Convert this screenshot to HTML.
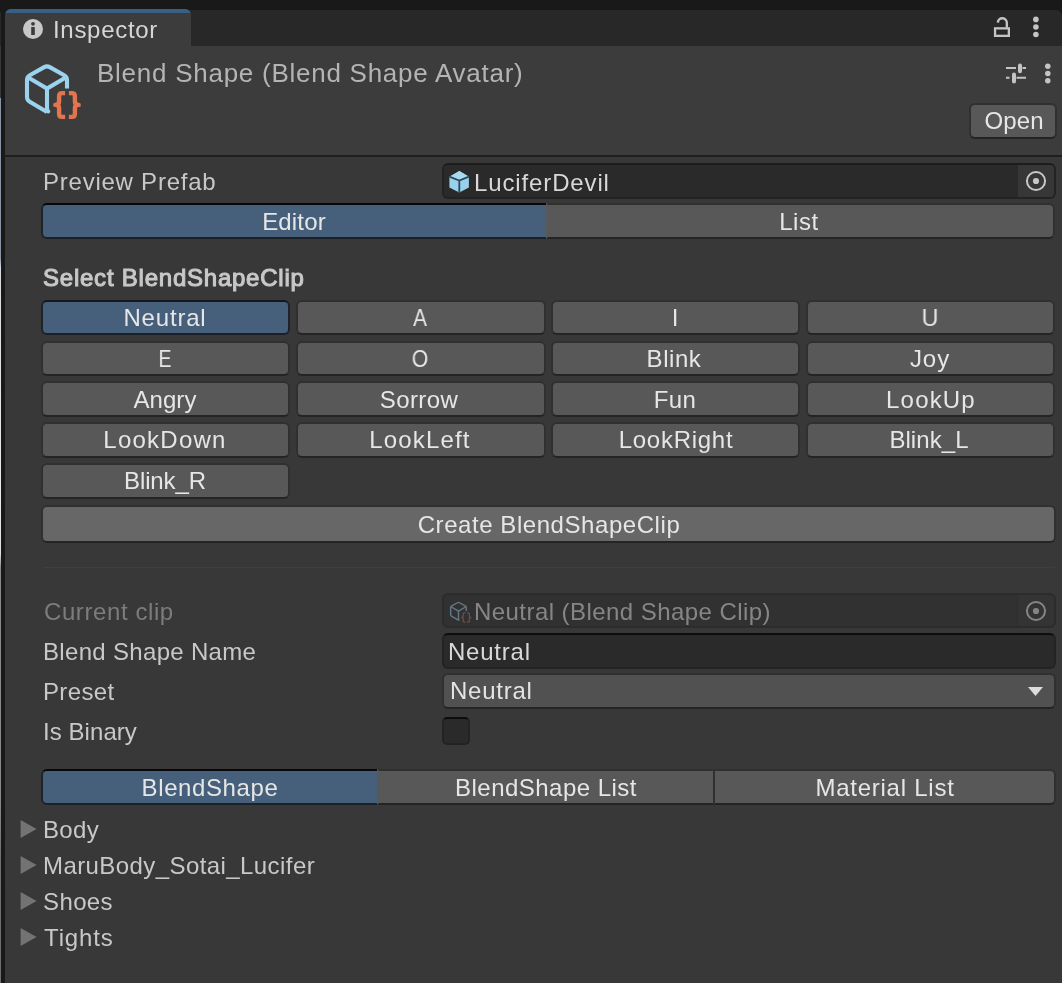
<!DOCTYPE html>
<html><head><meta charset="utf-8"><title>Inspector</title>
<style>
*{box-sizing:border-box;margin:0;padding:0}
html,body{width:1062px;height:983px;overflow:hidden;background:#191919}
body{position:relative;font-family:"Liberation Sans",sans-serif;font-size:24px;color:#c8c8c8}
.a{position:absolute}
.t{position:absolute;white-space:nowrap;line-height:1;will-change:transform}
.btn{position:absolute;background:#585858;border:2px solid #303030;border-bottom-color:#242424;border-radius:6px;color:#e6e6e6;white-space:nowrap;line-height:1}
.btn.on{background:#46607c;border-color:#14171c #1e232b #1c2027 #1e232b}
.btn span{display:block;white-space:nowrap;will-change:transform}
.fld{position:absolute;background:#2a2a2a;border:2px solid #232323;border-top-color:#1c1c1c;border-radius:6px}
</style></head><body>
<div class="a" style="left:0;top:12px;width:1.2px;height:34px;background:#282828"></div><div class="a" style="left:0;top:46px;width:1.2px;height:52px;background:#383838"></div><div class="a" style="left:0;top:98px;width:1.2px;height:885px;background:linear-gradient(#8a95a3 0,#8a95a3 160px,#d8dadc 170px,#e8e8e8 400px,#e0e0e0 455px,#8a8a8a 470px,#8a8a8a 700px,#707070 760px,#6e6e6e 100%)"></div>
<div class="a" id="tabbar" style="left:5px;top:9.5px;width:1057px;height:37px;background:#282828;border-radius:6px 6px 0 0"></div>
<div class="a" id="hdr" style="left:5px;top:46px;width:1057px;height:110px;background:#3c3c3c"></div>
<div class="a" id="bodybg" style="left:5px;top:157px;width:1057px;height:826px;background:#383838"></div>
<div class="a" id="sep" style="left:5px;top:155px;width:1057px;height:2px;background:#1f1f1f"></div>
<div class="a" id="tab" style="left:5px;top:8.7px;width:186px;height:38px;background:#3c3c3c;border-radius:6px 6px 0 0;overflow:hidden"><div class="a" style="left:0;top:0;width:100%;height:4px;background:#3a5f84"></div></div>
<svg class="a" style="left:22.3px;top:18px" width="22" height="22" viewBox="0 0 22 22"><circle cx="11" cy="11" r="10" fill="#c8c8c8"/><circle cx="11" cy="5.8" r="1.9" fill="#3c3c3c"/><rect x="9.2" y="9" width="3.6" height="8" fill="#3c3c3c"/></svg>
<div class="t" id="t_insp" style="left:52.72px;top:18.38px;color:#d6d6d6;letter-spacing:0.70px;margin-right:-0.70px;">Inspector</div>
<svg class="a" style="left:990px;top:14px" width="26" height="26" viewBox="0 0 26 26" fill="none" stroke="#c4c4c4" stroke-width="2.3"><rect x="5.05" y="14.35" width="13.8" height="7.5"/><path d="M7.85 8.6 A4.5 4.5 0 0 1 16.85 9 V13.4" stroke-width="2.4"/></svg>
<svg class="a" style="left:1030px;top:14px" width="12" height="26" viewBox="0 0 12 26" fill="#c4c4c4"><circle cx="5.9" cy="5.4" r="2.8"/><circle cx="5.9" cy="13" r="2.8"/><circle cx="5.9" cy="20.5" r="2.8"/></svg>
<svg class="a" id="bigicon" style="left:15px;top:55px" width="80" height="74" viewBox="0 0 80 74" fill="none"><g stroke="#9bd2ee" stroke-width="4.1" stroke-linejoin="round" stroke-linecap="butt"><path d="M52.00 33.60 L52.00 25.00 Q52.00 21.80 49.21 20.24 L34.79 12.16 Q32.00 10.60 29.21 12.16 L14.79 20.24 Q12.00 21.80 12.00 25.00 L12.00 42.00 Q12.00 45.20 14.76 46.82 L32.00 56.90"/><path d="M12 21.8 L32 33.6 L52 21.8" stroke-linejoin="miter"/><path d="M32 33.6 V56.9"/><circle cx="33.2" cy="56.4" r="2.05" fill="#9bd2ee" stroke="none"/></g><g stroke="#e2754f" stroke-width="4.4" stroke-linecap="butt" stroke-linejoin="round"><path d="M50.10 38.1 H47.10 Q44.10 38.1 44.10 41.1 V46.6 Q44.10 49.9 40.30 49.9 Q44.10 49.9 44.10 53.2 V58.9 Q44.10 61.9 47.10 61.9 H50.10"/><path d="M53.90 38.1 H56.90 Q59.90 38.1 59.90 41.1 V46.6 Q59.90 49.9 63.70 49.9 Q59.90 49.9 59.90 53.2 V58.9 Q59.90 61.9 56.90 61.9 H53.90"/></g></svg>
<div class="t" id="t_title" style="left:97.48px;top:59.99px;font-size:26px;color:#b4b4b4;letter-spacing:0.74px;margin-right:-0.74px;">Blend Shape (Blend Shape Avatar)</div>
<svg class="a" style="left:1004px;top:61px" width="24" height="24" viewBox="0 0 24 24" fill="none" stroke="#c4c4c4" stroke-width="2"><path d="M2 7 H12 M18.5 7 H22 M2 16.7 H5.5 M12.5 16.7 H22"/><path d="M16 4.4 V10.2 M10 13.6 V20.4" stroke-width="4" stroke-linecap="round"/></svg>
<svg class="a" style="left:1042px;top:59.5px" width="12" height="26" viewBox="0 0 12 26" fill="#c4c4c4"><circle cx="5.8" cy="6.3" r="2.75"/><circle cx="5.8" cy="13.5" r="2.75"/><circle cx="5.8" cy="20.7" r="2.75"/></svg>
<div class="btn" id="b_open" style="left:969px;top:103px;width:88.20px;height:35.80px;"><span style="position:absolute;left:42.60px;top:3.68px;transform:translateX(-50%);letter-spacing:0.13px;margin-right:-0.13px;">Open</span></div>
<div class="t" id="t_pp" style="left:42.50px;top:169.88px;letter-spacing:0.76px;margin-right:-0.76px;">Preview Prefab</div>
<div class="fld" id="f_pp" style="left:442px;top:162.8px;width:614px;height:36px;overflow:hidden"><div class="a" style="right:0;top:0;width:36.4px;height:100%;background:#373737"></div></div>
<svg class="a" id="cube1" style="left:447px;top:169px" width="24" height="25" viewBox="0 0 24 25"><path d="M12.4 1.9 L21.9 7.7 V18.6 L12.3 23.5 L2.4 18.6 V7.7 Z" fill="#99d0ec"/><path d="M12.4 1.9 L21.9 7.7 L12.3 11.4 L2.4 7.7 Z" fill="#a7daf1"/><path d="M2.4 7.7 L12.3 11.6 L21.9 7.7 M12.3 11.6 V23.5" stroke="#2d485b" stroke-width="1.8" fill="none"/></svg>
<div class="t" id="t_ld" style="left:473.96px;top:171.08px;color:#d8d8d8;letter-spacing:0.87px;margin-right:-0.87px;">LuciferDevil</div>
<svg class="a" style="left:1024.9px;top:170px;overflow:visible" width="22" height="22" viewBox="0 0 22 22"><circle cx="11" cy="11" r="9.05" fill="none" stroke="#c8c8c8" stroke-width="2"/><circle cx="11" cy="11" r="3.1" fill="#c8c8c8"/></svg>
<div class="btn on" id="tb_ed" style="left:41px;top:203px;width:507.00px;height:36.00px;border-radius:6px 0 0 6px;border-top-color:#06080c;"><span style="position:absolute;left:250.72px;top:4.88px;transform:translateX(-50%);letter-spacing:0.14px;margin-right:-0.14px;">Editor</span></div>
<div class="btn" id="tb_li" style="left:546px;top:203px;width:509.40px;height:36.00px;border-radius:0 6px 6px 0;border-left-color:transparent;"><span style="position:absolute;left:251.22px;top:4.88px;transform:translateX(-50%);letter-spacing:0.60px;margin-right:-0.60px;">List</span></div>
<div class="t" id="t_sel" style="left:43.48px;top:265.98px;color:#c8c8c8;letter-spacing:0.77px;margin-right:-0.77px;-webkit-text-stroke:1.05px #c8c8c8;">Select BlendShapeClip</div>
<div class="btn on" id="g0" style="left:41px;top:299.7px;width:248.80px;height:35.80px;"><span style="position:absolute;left:122.40px;top:4.28px;transform:translateX(-50%);letter-spacing:0.81px;margin-right:-0.81px;">Neutral</span></div>
<div class="btn" id="g1" style="left:296px;top:299.7px;width:249.60px;height:35.80px;"><span style="position:absolute;left:122.48px;top:4.28px;transform:translateX(-50%) scaleX(0.87);">A</span></div>
<div class="btn" id="g2" style="left:551px;top:299.7px;width:248.80px;height:35.80px;"><span style="position:absolute;left:121.96px;top:4.28px;transform:translateX(-50%);">I</span></div>
<div class="btn" id="g3" style="left:805.6px;top:299.7px;width:249.50px;height:35.80px;"><span style="position:absolute;left:122.30px;top:4.28px;transform:translateX(-50%) scaleX(0.97);">U</span></div>
<div class="btn" id="g4" style="left:41px;top:340.5px;width:248.80px;height:35.80px;"><span style="position:absolute;left:122.20px;top:4.38px;transform:translateX(-50%) scaleX(0.8);">E</span></div>
<div class="btn" id="g5" style="left:296px;top:340.5px;width:249.60px;height:35.80px;"><span style="position:absolute;left:121.90px;top:4.38px;transform:translateX(-50%) scaleX(0.88);">O</span></div>
<div class="btn" id="g6" style="left:551px;top:340.5px;width:248.80px;height:35.80px;"><span style="position:absolute;left:120.93px;top:4.38px;transform:translateX(-50%);letter-spacing:0.56px;margin-right:-0.56px;">Blink</span></div>
<div class="btn" id="g7" style="left:805.6px;top:340.5px;width:249.50px;height:35.80px;"><span style="position:absolute;left:122.16px;top:4.38px;transform:translateX(-50%);letter-spacing:0.94px;margin-right:-0.94px;">Joy</span></div>
<div class="btn" id="g8" style="left:41px;top:381.3px;width:248.80px;height:35.80px;"><span style="position:absolute;left:121.98px;top:4.68px;transform:translateX(-50%);letter-spacing:0.03px;margin-right:-0.03px;">Angry</span></div>
<div class="btn" id="g9" style="left:296px;top:381.3px;width:249.60px;height:35.80px;"><span style="position:absolute;left:121.22px;top:4.68px;transform:translateX(-50%);letter-spacing:0.38px;margin-right:-0.38px;">Sorrow</span></div>
<div class="btn" id="g10" style="left:551px;top:381.3px;width:248.80px;height:35.80px;"><span style="position:absolute;left:122.44px;top:4.68px;transform:translateX(-50%);letter-spacing:0.38px;margin-right:-0.38px;">Fun</span></div>
<div class="btn" id="g11" style="left:805.6px;top:381.3px;width:249.50px;height:35.80px;"><span style="position:absolute;left:123.22px;top:4.68px;transform:translateX(-50%);letter-spacing:1.18px;margin-right:-1.18px;">LookUp</span></div>
<div class="btn" id="g12" style="left:41px;top:422.1px;width:248.80px;height:35.80px;"><span style="position:absolute;left:122.32px;top:4.18px;transform:translateX(-50%);letter-spacing:1.25px;margin-right:-1.25px;">LookDown</span></div>
<div class="btn" id="g13" style="left:296px;top:422.1px;width:249.60px;height:35.80px;"><span style="position:absolute;left:122.35px;top:4.18px;transform:translateX(-50%);letter-spacing:1.15px;margin-right:-1.15px;">LookLeft</span></div>
<div class="btn" id="g14" style="left:551px;top:422.1px;width:248.80px;height:35.80px;"><span style="position:absolute;left:122.51px;top:4.18px;transform:translateX(-50%);letter-spacing:0.72px;margin-right:-0.72px;">LookRight</span></div>
<div class="btn" id="g15" style="left:805.6px;top:422.1px;width:249.50px;height:35.80px;"><span style="position:absolute;left:121.62px;top:4.18px;transform:translateX(-50%);letter-spacing:0.07px;margin-right:-0.07px;">Blink_L</span></div>
<div class="btn" id="g16" style="left:41px;top:462.9px;width:248.80px;height:35.80px;"><span style="position:absolute;left:121.52px;top:4.08px;transform:translateX(-50%);letter-spacing:-0.11px;margin-right:0.11px;">Blink_R</span></div>
<div class="btn" id="b_create" style="left:41px;top:505.2px;width:1015.40px;height:37.40px;background:#676767;"><span style="position:absolute;left:505.72px;top:5.48px;transform:translateX(-50%);letter-spacing:0.56px;margin-right:-0.56px;">Create BlendShapeClip</span></div>
<div class="a" style="left:44px;top:567px;width:1011px;height:1px;background:#3f3f3f"></div>
<div class="t" id="t_cc" style="left:43.60px;top:600.18px;color:#7c7c7c;letter-spacing:0.59px;margin-right:-0.59px;">Current clip</div>
<div class="fld" id="f_cc" style="left:441.8px;top:592.6px;width:614px;height:35.8px;background:#313131;border-color:#2c2c2c;overflow:hidden"><div class="a" style="right:0;top:0;width:36.4px;height:100%;background:#343434;border-left:1px solid #2f2f2f"></div></div>
<svg class="a" id="smicon" style="left:446.4px;top:598.3px" width="31.2" height="28.9" viewBox="0 0 80 74" fill="none" opacity="0.45"><g stroke="#9bd2ee" stroke-width="3.6" stroke-linejoin="round" stroke-linecap="butt"><path d="M52.00 33.60 L52.00 25.00 Q52.00 21.80 49.21 20.24 L34.79 12.16 Q32.00 10.60 29.21 12.16 L14.79 20.24 Q12.00 21.80 12.00 25.00 L12.00 42.00 Q12.00 45.20 14.76 46.82 L32.00 56.90"/><path d="M12 21.8 L32 33.6 L52 21.8" stroke-linejoin="miter"/><path d="M32 33.6 V56.9"/><circle cx="33.2" cy="56.4" r="1.8" fill="#9bd2ee" stroke="none"/></g><g stroke="#b9735c" stroke-width="3.4" stroke-linecap="butt" stroke-linejoin="round"><path d="M50.10 38.1 H47.10 Q44.10 38.1 44.10 41.1 V46.6 Q44.10 49.9 40.30 49.9 Q44.10 49.9 44.10 53.2 V58.9 Q44.10 61.9 47.10 61.9 H50.10"/><path d="M53.90 38.1 H56.90 Q59.90 38.1 59.90 41.1 V46.6 Q59.90 49.9 63.70 49.9 Q59.90 49.9 59.90 53.2 V58.9 Q59.90 61.9 56.90 61.9 H53.90"/></g></svg>
<div class="t" id="t_ncl" style="left:473.66px;top:600.18px;color:#868686;letter-spacing:0.44px;margin-right:-0.44px;">Neutral (Blend Shape Clip)</div>
<svg class="a" style="left:1024.9px;top:600px;overflow:visible" width="22" height="22" viewBox="0 0 22 22" opacity="0.55"><circle cx="11" cy="11" r="9.05" fill="none" stroke="#c8c8c8" stroke-width="2"/><circle cx="11" cy="11" r="3.1" fill="#c8c8c8"/></svg>
<div class="t" id="t_bsn" style="left:43.44px;top:639.68px;letter-spacing:0.32px;margin-right:-0.32px;">Blend Shape Name</div>
<div class="fld" id="f_bsn" style="left:441.8px;top:632.9px;width:614px;height:35.8px;border-top-color:#0d0d0d"></div>
<div class="t" id="t_n1" style="left:447.86px;top:639.98px;color:#d8d8d8;letter-spacing:0.78px;margin-right:-0.78px;">Neutral</div>
<div class="t" id="t_pre" style="left:43.40px;top:679.68px;letter-spacing:0.35px;margin-right:-0.35px;">Preset</div>
<div class="a" id="f_pre" style="left:441.9px;top:672.7px;width:614px;height:35.9px;background:#515151;border:2px solid #303030;border-bottom-color:#242424;border-radius:6px"></div>
<div class="t" id="t_n2" style="left:449.80px;top:679.18px;color:#e4e4e4;letter-spacing:0.76px;margin-right:-0.76px;">Neutral</div>
<svg class="a" style="left:1027px;top:686px" width="18" height="12" viewBox="0 0 18 12"><path d="M1 1 H16 L8.5 10 Z" fill="#dcdcdc"/></svg>
<div class="t" id="t_ib" style="left:43.10px;top:719.68px;letter-spacing:0.06px;margin-right:-0.06px;">Is Binary</div>
<div class="fld" id="f_cb" style="left:442px;top:716.6px;width:27.8px;height:28px;border-radius:5px;border-top-color:#0d0d0d"></div>
<div class="btn on" id="tb2a" style="left:41px;top:768.8px;width:338.20px;height:36.00px;border-radius:6px 0 0 6px;border-top-color:#06080c;"><span style="position:absolute;left:167.00px;top:5.28px;transform:translateX(-50%);letter-spacing:0.60px;margin-right:-0.60px;">BlendShape</span></div>
<div class="btn" id="tb2b" style="left:377.2px;top:768.8px;width:337.60px;height:36.00px;border-radius:0;border-left-color:transparent;"><span style="position:absolute;left:167.04px;top:5.28px;transform:translateX(-50%);letter-spacing:0.48px;margin-right:-0.48px;">BlendShape List</span></div>
<div class="btn" id="tb2c" style="left:712.8px;top:768.8px;width:342.80px;height:36.00px;border-radius:0 6px 6px 0;"><span style="position:absolute;left:169.82px;top:5.28px;transform:translateX(-50%);letter-spacing:0.75px;margin-right:-0.75px;">Material List</span></div>
<svg class="a" style="left:20px;top:819.0px" width="18" height="20" viewBox="0 0 18 20"><path d="M0.6 1 L16.6 10 L0.6 19 Z" fill="#737373"/></svg>
<div class="t" id="t_f1" style="left:42.94px;top:817.88px;letter-spacing:0.32px;margin-right:-0.32px;">Body</div>
<svg class="a" style="left:20px;top:854.9px" width="18" height="20" viewBox="0 0 18 20"><path d="M0.6 1 L16.6 10 L0.6 19 Z" fill="#737373"/></svg>
<div class="t" id="t_f2" style="left:42.54px;top:853.78px;letter-spacing:0.42px;margin-right:-0.42px;">MaruBody_Sotai_Lucifer</div>
<svg class="a" style="left:20px;top:890.9px" width="18" height="20" viewBox="0 0 18 20"><path d="M0.6 1 L16.6 10 L0.6 19 Z" fill="#737373"/></svg>
<div class="t" id="t_f3" style="left:43.26px;top:889.78px;letter-spacing:0.39px;margin-right:-0.39px;">Shoes</div>
<svg class="a" style="left:20px;top:927.0px" width="18" height="20" viewBox="0 0 18 20"><path d="M0.6 1 L16.6 10 L0.6 19 Z" fill="#737373"/></svg>
<div class="t" id="t_f4" style="left:44.06px;top:925.88px;letter-spacing:0.88px;margin-right:-0.88px;">Tights</div>
</body></html>
